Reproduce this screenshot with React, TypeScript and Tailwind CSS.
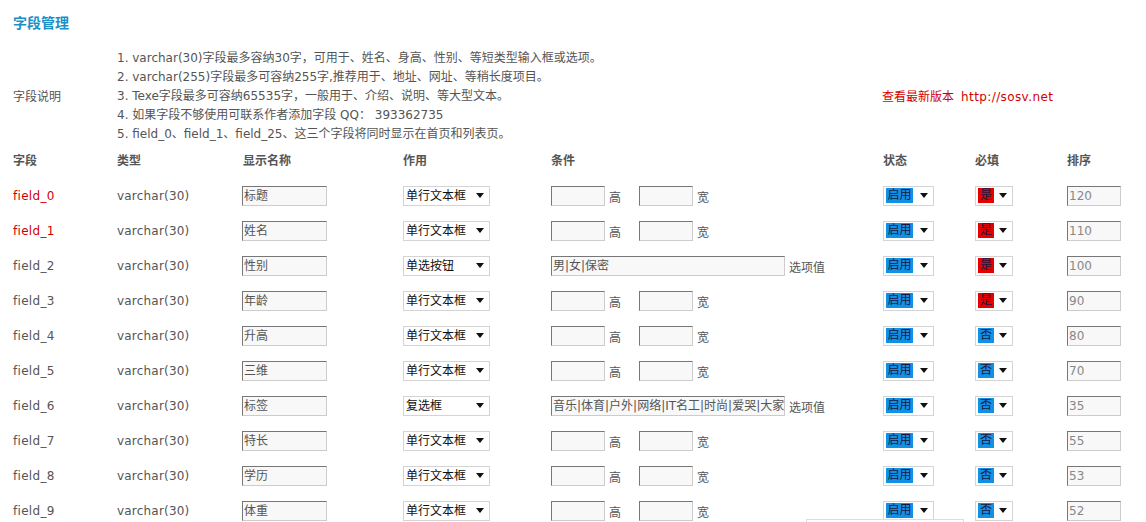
const rows = [
  { field: 'field_0', label: '标题', use: '单行文本框', sort: '120', req: true, hot: true },
  { field: 'field_1', label: '姓名', use: '单行文本框', sort: '110', req: true, hot: true },
  { field: 'field_2', label: '性别', use: '单选按钮', sort: '100', req: true, options: '男|女|保密' },
  { field: 'field_3', label: '年龄', use: '单行文本框', sort: '90', req: true },
  { field: 'field_4', label: '升高', use: '单行文本框', sort: '80', req: false },
  { field: 'field_5', label: '三维', use: '单行文本框', sort: '70', req: false },
  { field: 'field_6', label: '标签', use: '复选框', sort: '35', req: false, options: '音乐|体育|户外|网络|IT名工|时尚|爱哭|大家' },
  { field: 'field_7', label: '特长', use: '单行文本框', sort: '55', req: false },
  { field: 'field_8', label: '学历', use: '单行文本框', sort: '53', req: false },
  { field: 'field_9', label: '体重', use: '单行文本框', sort: '52', req: false },
];

const notes = [
  '1. varchar(30)字段最多容纳30字，可用于、姓名、身高、性别、等短类型输入框或选项。',
  '2. varchar(255)字段最多可容纳255字,推荐用于、地址、网址、等稍长度项目。',
  '3. Texe字段最多可容纳65535字，一般用于、介绍、说明、等大型文本。',
  '4. 如果字段不够使用可联系作者添加字段  QQ：  393362735',
  '5. field_0、field_1、field_25、这三个字段将同时显示在首页和列表页。',
];

const cols = 'grid grid-cols-[104px_125px_161px_148px_332px_92px_92px_1fr]';

function Arrow() {
  return (
    <svg width="8" height="5" viewBox="0 0 8 5" className="shrink-0">
      <path d="M0 0H8L4 5Z" fill="#111" />
    </svg>
  );
}

function Box({ value, w, muted }: { value?: string; w: string; muted?: boolean }) {
  return (
    <div
      className={`${w} h-[20px] border border-t-[#777] border-l-[#777] border-b-[#ccc] border-r-[#ccc] bg-[#f8f8f8] pl-px leading-[18px] overflow-hidden whitespace-nowrap ${
        muted ? 'text-[#888]' : 'text-[#555]'
      }`}
    >
      {value}
    </div>
  );
}

function Select({ w, children }: { w: string; children: React.ReactNode }) {
  return (
    <div className={`${w} h-[20px] border border-[#d4d4d4] bg-white flex items-center justify-between pl-[2px] pr-[5px]`}>
      {children}
      <Arrow />
    </div>
  );
}

export default function App() {
  return (
    <div
      className="relative w-[1146px] h-[522px] overflow-hidden bg-white text-[12px] text-[#555] pl-[13px] pt-[13px]"
      style={{ fontFamily: '"DejaVu Sans", "Noto Sans CJK SC", sans-serif' }}
    >
      <h1 className="text-[14px] leading-[20px] font-bold text-[#1b8fc6]">字段管理</h1>

      <div className="grid grid-cols-[104px_765px_1fr] items-center mt-[16px]">
        <div>字段说明</div>
        <div className="leading-[19px]">
          {notes.map((n) => (
            <div key={n} className="whitespace-nowrap">{n}</div>
          ))}
        </div>
        <div className="text-[#d40000] whitespace-nowrap">
          查看最新版本<span className="ml-[7px] tracking-[0.4px]">http://sosv.net</span>
        </div>
      </div>

      <div className={`${cols} h-[34px] items-center font-bold`}>
        <div>字段</div>
        <div>类型</div>
        <div className="pl-px">显示名称</div>
        <div>作用</div>
        <div>条件</div>
        <div>状态</div>
        <div>必填</div>
        <div>排序</div>
      </div>

      {rows.map((r) => (
        <div key={r.field} className={`${cols} h-[35px] items-center`}>
          <div className={`tracking-[0.3px] ${r.hot ? 'text-[#d40000]' : ''}`}>{r.field}</div>
          <div className="tracking-[0.2px]">varchar(30)</div>
          <Box value={r.label} w="w-[85px]" />
          <Select w="w-[87px]">
            <span className="text-[#111]">{r.use}</span>
          </Select>
          {r.options ? (
            <div className="flex items-end">
              <Box value={r.options} w="w-[234px]" />
              <span className="ml-[4px] leading-[16px]">选项值</span>
            </div>
          ) : (
            <div className="flex items-end">
              <Box w="w-[54px]" />
              <span className="ml-[4px] leading-[16px]">高</span>
              <div className="ml-[18px]">
                <Box w="w-[54px]" />
              </div>
              <span className="ml-[4px] leading-[16px]">宽</span>
            </div>
          )}
          <Select w="w-[51px]">
            <span className="bg-[#1190e6] text-[#1a1a40] leading-[15px] w-[27px] text-center">启用</span>
          </Select>
          <Select w="w-[38px]">
            <span
              className={`${r.req ? 'bg-[#e60000]' : 'bg-[#1190e6]'} text-[#1a1a40] leading-[15px] w-[16px] text-center`}
            >
              {r.req ? '是' : '否'}
            </span>
          </Select>
          <Box value={r.sort} w="w-[54px]" muted />
        </div>
      ))}

      <div className="absolute left-[806px] top-[519px] w-[158px] h-[12px] border border-[#ddd] bg-white" />
    </div>
  );
}
